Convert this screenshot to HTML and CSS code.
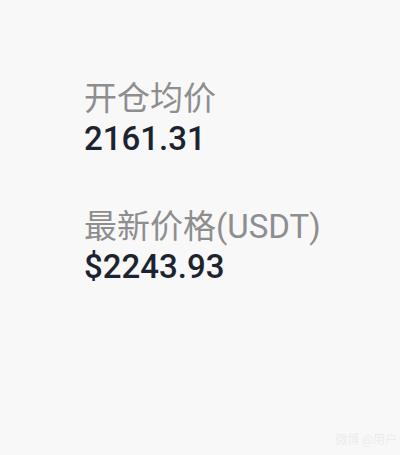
FILE: index.html
```html
<!DOCTYPE html>
<html lang="zh-CN">
<head>
	<meta charset="UTF-8">
	<title>持仓</title>
	<link rel="stylesheet" href="styles.css">
</head>
<body>
	<div class="wrap">
		<div class="item">
			<div class="label">开仓均价</div>
			<div class="value">2161.31</div>
		</div>
		<div class="item">
			<div class="label">最新价格(USDT)</div>
			<div class="value">$2243.93</div>
		</div>
	</div>
	<div class="mark">微博 @用户</div>
</body>
</html>
```

FILE: styles.css
```css
* {
	margin: 0;
	padding: 0;
}
html,
body {
	height: 100%;
}
body {
	background-color: #f8f8f9;
	font-family: Roboto, "Noto Sans CJK SC", sans-serif;
	position: relative;
	overflow: hidden;
}
.wrap {
	padding: 79px 0 0 84px;
	display: flex;
	flex-direction: column;
	gap: 49px;
}
.label {
	font-size: 33px;
	line-height: 40px;
	color: #8e8e8e;
}
.value {
	font-size: 33px;
	line-height: 39px;
	font-weight: 500;
	color: #1c2430;
}
.mark {
	position: absolute;
	right: 3px;
	bottom: 8px;
	font-size: 12px;
	color: #ececec;
}
```
